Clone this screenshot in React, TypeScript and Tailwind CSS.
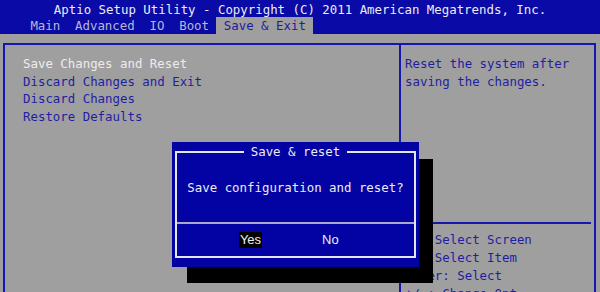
import React from 'react';

const tabs = ['Main', 'Advanced', 'IO', 'Boot', 'Save & Exit'];
const items = ['Save Changes and Reset', 'Discard Changes and Exit', 'Discard Changes', 'Restore Defaults'];
const help = ['\u2192\u2190: Select Screen', '\u2191\u2193: Select Item', 'Enter: Select', '+/-: Change Opt.'];

export default function App() {
  return (
    <div className="relative w-[600px] h-[292px] overflow-hidden bg-[#a09fa0] font-['DejaVu_Sans_Mono',monospace] text-[12.4px] whitespace-pre">
      {/* Title bar + tabs */}
      <div className="h-[34px] bg-[#0a0aa6]">
        <div className="h-[17px] pt-[1px] leading-[17px] text-center text-[#ececf2]">
          Aptio Setup Utility - Copyright (C) 2011 American Megatrends, Inc.
        </div>
        <div className="flex h-[17px] pl-[23px] leading-[18px]">
          {tabs.map((t) =>
            t === 'Save & Exit' ? (
              <div key={t} className="px-[7.4px] bg-[#a09fa0] text-[#1c1ca0]">{t}</div>
            ) : (
              <div key={t} className="px-[7.4px] text-[#b8b8d2]">{t}</div>
            )
          )}
        </div>
      </div>

      {/* Main frame */}
      <div className="ml-[3px] mr-[4px] mt-[9px] h-[270px] flex border-2 border-[#1616b0]">
        <div className="w-[396px] border-r-2 border-[#1616b0] pl-[18px] pt-[10px] leading-[17.7px]">
          {items.map((it, i) => (
            <div key={it} className={i === 0 ? 'text-[#ececec]' : 'text-[#1e1ea2]'}>{it}</div>
          ))}
        </div>
        <div className="flex-1 flex flex-col text-[#1e1ea2]">
          <div className="h-[177px] pl-[4px] pt-[10px] leading-[17.7px]">
            <div>Reset the system after</div>
            <div>saving the changes.</div>
          </div>
          <div className="h-[2px] mr-[3px] bg-[#1616b0]" />
          <div className="pl-[4px] pt-[7px] leading-[18px]">
            {help.map((h) => (
              <div key={h}>{h}</div>
            ))}
          </div>
        </div>
      </div>

      {/* Dialog shadow */}
      <div className="absolute left-[187px] top-[159px] w-[246px] h-[124px] bg-black" />

      {/* Dialog */}
      <div className="absolute left-[172px] top-[142px] w-[247px] h-[125px] bg-[#0303a4] px-[3px] pt-[9px]">
        <div className="relative border-2 border-[#e4e4ee] h-[107px] flex flex-col">
          <div className="absolute -top-[10px] left-0 right-0 flex justify-center">
            <div className="bg-[#0303a4] px-[7px] leading-[17px] text-[#ececf2]">Save &amp; reset</div>
          </div>
          <div className="h-[69px] pt-[1px] flex items-center justify-center text-[#ececf2]">
            Save configuration and reset?
          </div>
          <div className="h-[2px] bg-[#a8a8c8]" />
          <div className="flex-1 flex items-center pl-[62px] gap-[60px] font-['Liberation_Sans',sans-serif] text-[13px] text-[#f0f0f0]">
            <div className="bg-black h-[16px] w-[23px] leading-[16px] text-center">Yes</div>
            <div className="leading-[16px]">No</div>
          </div>
        </div>
      </div>
    </div>
  );
}
